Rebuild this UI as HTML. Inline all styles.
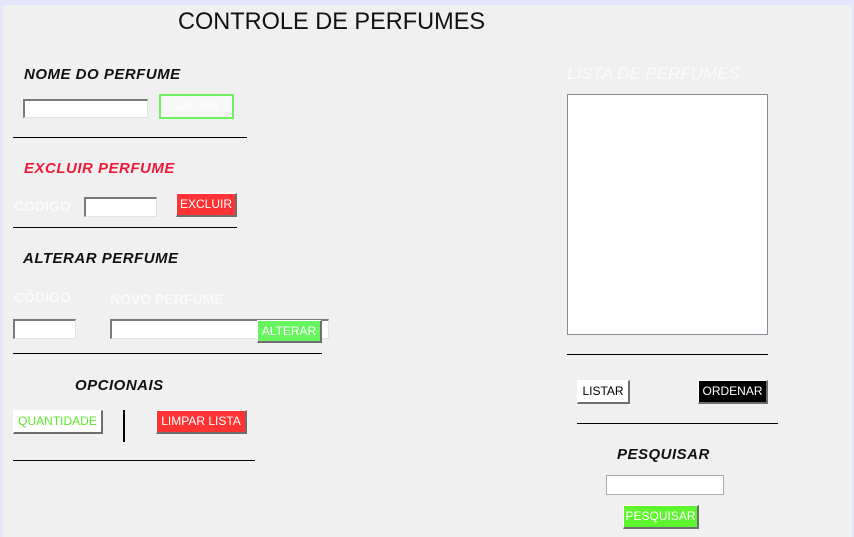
<!DOCTYPE html>
<html><head><meta charset="utf-8"><style>
*{margin:0;padding:0;box-sizing:border-box}
body{width:854px;height:537px;background:#e4e4fc;position:relative;overflow:hidden;font-family:"Liberation Sans",sans-serif}
#p{position:absolute;left:3px;top:5px;width:849px;height:532px;background:#f0f0f0}
.a{position:absolute}
.h{position:absolute;font-weight:bold;font-style:italic;font-size:15px;color:#111;letter-spacing:0.5px;white-space:nowrap}
.in{position:absolute;background:#fff;border-top:2px solid #7a7a7a;border-left:2px solid #7a7a7a;border-bottom:1px solid #e3e3e3;border-right:1px solid #e3e3e3}
.btn{position:absolute;border-top:1px solid #fff;border-left:1px solid #fff;border-bottom:2px solid #6e6e6e;border-right:2px solid #6e6e6e;font-size:12px;text-align:center;white-space:nowrap}
.ln{position:absolute;height:1px;background:#000}
.w{position:absolute;color:#fafafa;font-weight:bold;font-size:14px;white-space:nowrap}
</style></head><body><div id="p"></div>
<div class="a" style="left:178px;top:8px;font-size:24px;color:#111;white-space:nowrap;transform:scaleX(0.98);transform-origin:left">CONTROLE DE PERFUMES</div>
<div class="h" style="left:24px;top:66px">NOME DO PERFUME</div>
<div class="in" style="left:23px;top:99px;width:125px;height:19px"></div>
<div class="a" style="left:159px;top:94px;width:75px;height:25px;border:2px solid #6ef060;background:#f8f8f8;color:#fff;font-size:12px;text-align:center;line-height:21px">SALVAR</div>
<div class="ln" style="left:13px;top:137px;width:234px"></div>
<div class="h" style="left:24px;top:160px;color:#ee1a3a">EXCLUIR PERFUME</div>
<div class="w" style="left:14px;top:198px">CÓDIGO</div>
<div class="in" style="left:84px;top:197px;width:73px;height:20px"></div>
<div class="btn" style="left:176px;top:193px;width:61px;height:24px;background:#f33;color:#fff;line-height:21px">EXCLUIR</div>
<div class="ln" style="left:13px;top:227px;width:224px"></div>
<div class="h" style="left:23px;top:250px">ALTERAR PERFUME</div>
<div class="w" style="left:14px;top:289px">CÓDIGO</div>
<div class="w" style="left:110px;top:291px">NOVO PERFUME</div>
<div class="in" style="left:13px;top:319px;width:63px;height:20px"></div>
<div class="in" style="left:110px;top:319px;width:219px;height:20px"></div>
<div class="btn" style="left:257px;top:320px;width:65px;height:23px;background:#66f55e;color:#fff;line-height:20px">ALTERAR</div>
<div class="ln" style="left:13px;top:353px;width:309px"></div>
<div class="h" style="left:75px;top:377px">OPCIONAIS</div>
<div class="btn" style="left:13px;top:410px;width:90px;height:24px;background:#fff;color:#5ee82e;line-height:21px">QUANTIDADE</div>
<div class="a" style="left:123px;top:410px;width:2px;height:32px;background:#000"></div>
<div class="btn" style="left:156px;top:410px;width:91px;height:24px;background:#f33;color:#fff;line-height:21px">LIMPAR LISTA</div>
<div class="ln" style="left:13px;top:460px;width:242px"></div>
<div class="a" style="left:567px;top:64px;font-size:17px;font-style:italic;color:#fafafa;white-space:nowrap">LISTA DE PERFUMES</div>
<div class="a" style="left:567px;top:94px;width:201px;height:241px;background:#fff;border:1px solid #8a8a96"></div>
<div class="ln" style="left:567px;top:354px;width:201px"></div>
<div class="btn" style="left:577px;top:380px;width:53px;height:24px;background:#fff;color:#000;line-height:21px">LISTAR</div>
<div class="btn" style="left:698px;top:380px;width:70px;height:24px;background:#000;color:#fff;line-height:21px">ORDENAR</div>
<div class="ln" style="left:577px;top:423px;width:201px"></div>
<div class="h" style="left:617px;top:446px">PESQUISAR</div>
<div class="a" style="left:606px;top:475px;width:118px;height:20px;background:#fff;border:1px solid #aaa"></div>
<div class="btn" style="left:623px;top:505px;width:76px;height:24px;background:#5ff52e;color:#fff;line-height:21px">PESQUISAR</div>
</body></html>
